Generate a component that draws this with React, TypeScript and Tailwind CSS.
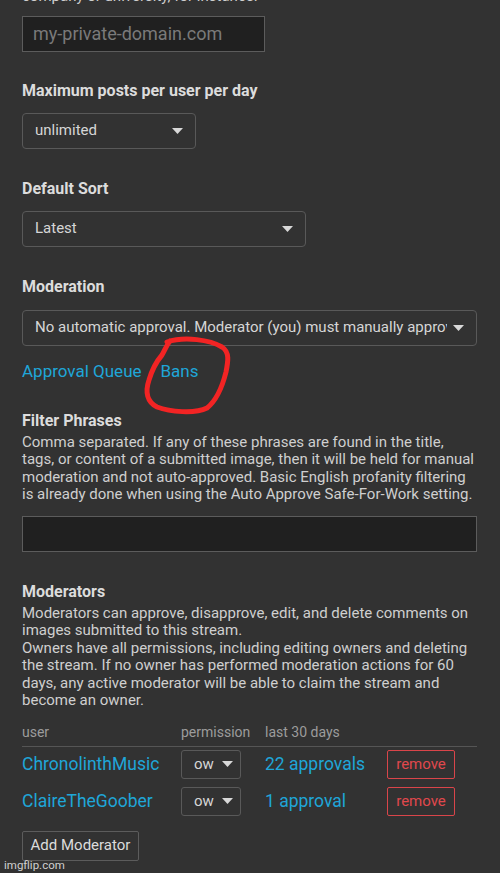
import React from 'react'

const font = { fontFamily: 'Roboto, "Noto Sans", sans-serif' }

function Caret() {
  return (
    <svg width="11" height="6" viewBox="0 0 11 6" className="shrink-0">
      <path d="M0 0 L11 0 L5.5 6 Z" fill="#d8d8d8" />
    </svg>
  )
}

function Select({ label, width }: { label: string; width: string }) {
  return (
    <div
      className={`flex h-[36px] items-center justify-between gap-[6px] overflow-hidden rounded-[4px] border border-[#595959] pl-[12px] pr-[12px] ${width}`}
    >
      <span className="min-w-0 overflow-hidden whitespace-nowrap text-[15px] text-[#d6d6d6]">{label}</span>
      <Caret />
    </div>
  )
}

function Heading({ children, className = '' }: { children: React.ReactNode; className?: string }) {
  return <h3 className={`text-[16px] font-bold leading-[19px] text-[#dcdcdc] ${className}`}>{children}</h3>
}

const moderators = [
  { name: 'ChronolinthMusic', approvals: '22 approvals' },
  { name: 'ClaireTheGoober', approvals: '1 approval' },
]

export default function App() {
  return (
    <div style={font} className="relative h-[873px] w-[500px] overflow-hidden bg-[#323232]">
      <div className="pl-[22px] pr-[23px]">
        <p className="mt-[-12px] text-[15px] leading-[17.5px] text-[#cfcfcf]">
          company or university, for instance.
        </p>
        <div className="mt-[10px] flex h-[36px] w-[243px] items-center border border-[#5c5c5c] bg-[#202020] px-[10px]">
          <span className="text-[18px] text-[#7a7a7a]">my-private-domain.com</span>
        </div>

        <Heading className="mt-[29px]">Maximum posts per user per day</Heading>
        <div className="mt-[13px]">
          <Select label="unlimited" width="w-[174px]" />
        </div>

        <Heading className="mt-[30px]">Default Sort</Heading>
        <div className="mt-[13px]">
          <Select label="Latest" width="w-[284px]" />
        </div>

        <Heading className="mt-[30px]">Moderation</Heading>
        <div className="mt-[14px]">
          <Select
            label="No automatic approval. Moderator (you) must manually approve every submission."
            width="w-full"
          />
        </div>

        <div className="mt-[15px] flex gap-[19px] text-[17px] leading-[20px] text-[#1fa6d8]">
          <span>Approval Queue</span>
          <span>Bans</span>
        </div>

        <Heading className="mt-[30px]">Filter Phrases</Heading>
        <p className="mt-[4px] text-[15px] leading-[17.5px] text-[#cfcfcf]">
          Comma separated. If any of these phrases are found in the title, tags, or content of a submitted image,
          then it will be held for manual moderation and not auto-approved. Basic English profanity filtering is
          already done when using the Auto Approve Safe-For-Work setting.
        </p>
        <div className="mt-[12px] h-[36px] w-full border border-[#5c5c5c] bg-[#202020]" />

        <Heading className="mt-[30px]">Moderators</Heading>
        <p className="mt-[4px] text-[15px] leading-[17.5px] text-[#cfcfcf]">
          Moderators can approve, disapprove, edit, and delete comments on images submitted to this stream.
          <br />
          Owners have all permissions, including editing owners and deleting the stream. If no owner has performed
          moderation actions for 60 days, any active moderator will be able to claim the stream and become an owner.
        </p>

        <div className="mt-[14px] grid grid-cols-[159px_84px_122px_1fr] border-b border-[#555] pb-[5px] text-[14px] leading-[17px] text-[#9c9c9c]">
          <span>user</span>
          <span>permission</span>
          <span>last 30 days</span>
          <span />
        </div>
        <div className="mt-[3px] flex flex-col gap-[8px]">
          {moderators.map((m) => (
            <div key={m.name} className="grid h-[29px] grid-cols-[159px_84px_122px_1fr] items-center">
              <span className="text-[17.5px] text-[#1fa6d8]">{m.name}</span>
              <div className="flex h-[29px] w-[60px] items-center gap-[8px] rounded-[3px] border border-[#595959] pl-[12px]">
                <span className="text-[15px] text-[#d6d6d6]">ow</span>
                <Caret />
              </div>
              <span className="text-[17.5px] text-[#1fa6d8]">{m.approvals}</span>
              <div className="flex h-[29px] w-[68px] items-center justify-center rounded-[2px] border border-[#d9454a] text-[15px] text-[#e0484d]">
                remove
              </div>
            </div>
          ))}
        </div>

        <div className="mt-[15px] flex h-[30px] w-[117px] items-center justify-center rounded-[2px] border border-[#5c5c5c] text-[15px] text-[#dcdcdc]">
          Add Moderator
        </div>
      </div>

      {/* hand-drawn annotation */}
      <svg className="pointer-events-none absolute left-0 top-0" width="500" height="873">
        <path
          d="M167 342 C185 336 210 340 222 347 C230 352 228 362 226 372 C222 388 217 400 207 408 C195 414 170 412 157 407 C147 402 145 392 149 380 C152 370 156 362 162 355 C165 350 166 346 170 341"
          fill="none"
          stroke="#f22424"
          strokeWidth="5"
          strokeLinecap="round"
          strokeLinejoin="round"
        />
      </svg>

      <span className="absolute left-[4px] top-[857px] text-[11.5px] text-[#d0d0d0]">imgflip.com</span>
    </div>
  )
}
